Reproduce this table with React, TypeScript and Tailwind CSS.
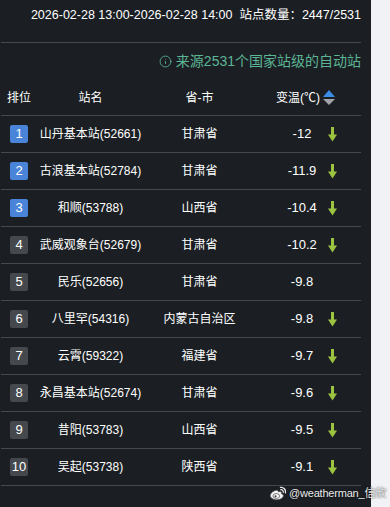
import React from 'react';
import { Info } from 'lucide-react';

interface StationRow {
  rank: number;
  name: string;
  province: string;
  change: string;
  down: boolean;
}

const rows: StationRow[] = [
  { rank: 1, name: '山丹基本站(52661)', province: '甘肃省', change: '-12', down: true },
  { rank: 2, name: '古浪基本站(52784)', province: '甘肃省', change: '-11.9', down: true },
  { rank: 3, name: '和顺(53788)', province: '山西省', change: '-10.4', down: true },
  { rank: 4, name: '武威观象台(52679)', province: '甘肃省', change: '-10.2', down: true },
  { rank: 5, name: '民乐(52656)', province: '甘肃省', change: '-9.8', down: false },
  { rank: 6, name: '八里罕(54316)', province: '内蒙古自治区', change: '-9.8', down: true },
  { rank: 7, name: '云霄(59322)', province: '福建省', change: '-9.7', down: true },
  { rank: 8, name: '永昌基本站(52674)', province: '甘肃省', change: '-9.6', down: true },
  { rank: 9, name: '昔阳(53783)', province: '山西省', change: '-9.5', down: true },
  { rank: 10, name: '吴起(53738)', province: '陕西省', change: '-9.1', down: true },
];

const DownArrow = () => (
  <svg width="9" height="15" viewBox="0 0 9 15" className="block">
    <rect x="3" y="0" width="3" height="8" fill="#9dc441" />
    <polygon points="0,7.5 9,7.5 4.5,14.5" fill="#9dc441" />
  </svg>
);

const SortIcon = () => (
  <svg width="12" height="16" viewBox="0 0 12 16" className="block">
    <polygon points="6,0 12,7 0,7" fill="#3a8ee6" />
    <polygon points="0,9 12,9 6,15" fill="#a0a3a8" />
  </svg>
);

const WeiboLogo = () => (
  <svg width="18" height="15" viewBox="0 0 18 15" className="block">
    <path
      d="M7.2 4.2C4.6 4.6 1.2 7 1.2 9.6c0 2.6 3.2 4.2 6.4 4.2 3.8 0 6.8-2 6.8-4.1 0-1.3-1.2-1.9-2.1-2.2.5-1.1.3-2-.9-2.1-.9 0-2 .4-2 .4s.4-1.7-2.2-1.6z"
      fill="#f2f2f2"
      stroke="#444"
      strokeWidth="0.8"
    />
    <ellipse cx="7.3" cy="10" rx="3.3" ry="2.4" fill="#fff" stroke="#555" strokeWidth="0.8" />
    <circle cx="6.6" cy="10.3" r="1.1" fill="#444" />
    <path d="M11.5 1.4a4.5 4.5 0 0 1 5 5.4" fill="none" stroke="#e8e8e8" strokeWidth="1.4" strokeLinecap="round" />
    <path d="M11.8 3.7a2.2 2.2 0 0 1 2.5 2.6" fill="none" stroke="#e8e8e8" strokeWidth="1.2" strokeLinecap="round" />
  </svg>
);

export default function App() {
  return (
    <div
      className="relative flex h-[507px] w-[390px] overflow-hidden bg-[#f0f2f5]"
      style={{ fontFamily: '"Liberation Sans", "Noto Sans CJK SC", sans-serif' }}
    >
      <div className="h-full w-[371px] bg-[#1b1f24] pl-px pr-[10px] text-white">
        <div className="h-[43px] border-b border-[#45484d] pt-[6px] text-right text-[12.5px] leading-[18px] whitespace-nowrap">
          2026-02-28 13:00-2026-02-28 14:00&nbsp;&nbsp;站点数量：2447/2531
        </div>

        <div className="flex h-[37px] items-start justify-end gap-[4px] pt-[9px] text-[14px] leading-[18px] text-[#5cb594]">
          <Info size={13} strokeWidth={1.6} className="mt-[3px]" />
          <span>来源2531个国家站级的自动站</span>
        </div>

        <div className="grid h-[36px] grid-cols-[36px_107px_111px_106px] items-center border-b border-[#45484d] text-[12px] leading-[16px]">
          <div className="text-center">排位</div>
          <div className="text-center">站名</div>
          <div className="text-center">省-市</div>
          <div className="flex items-center pl-[21px]">
            <span>变温(℃)</span>
            <span className="ml-[3px]">
              <SortIcon />
            </span>
          </div>
        </div>

        {rows.map((r) => (
          <div
            key={r.rank}
            className="grid h-[37px] grid-cols-[36px_107px_111px_106px] items-center border-b border-[#45484d] text-[12px] leading-[16px]"
          >
            <div className="flex justify-center">
              <span
                className={`flex h-[18px] w-[18px] items-center justify-center rounded-[2px] text-[13px] ${
                  r.rank <= 3 ? 'bg-[#4a84d8]' : 'bg-[#45484d]'
                }`}
              >
                {r.rank}
              </span>
            </div>
            <div className="whitespace-nowrap text-center">{r.name}</div>
            <div className="whitespace-nowrap text-center">{r.province}</div>
            <div className="flex items-center pl-[23px]">
              <span className="w-[48px] text-center text-[13px]">{r.change}</span>
              {r.down && (
                <span className="ml-[2px]">
                  <DownArrow />
                </span>
              )}
            </div>
          </div>
        ))}
      </div>

      <div className="absolute left-[269px] top-[485px] flex items-center gap-[2px] whitespace-nowrap">
        <WeiboLogo />
        <span
          className="text-[11px] leading-[16px] tracking-[-0.2px] text-[#ececec]"
          style={{ textShadow: '0 0 2px rgba(0,0,0,0.9)' }}
        >
          @weatherman_信欣
        </span>
      </div>
    </div>
  );
}
